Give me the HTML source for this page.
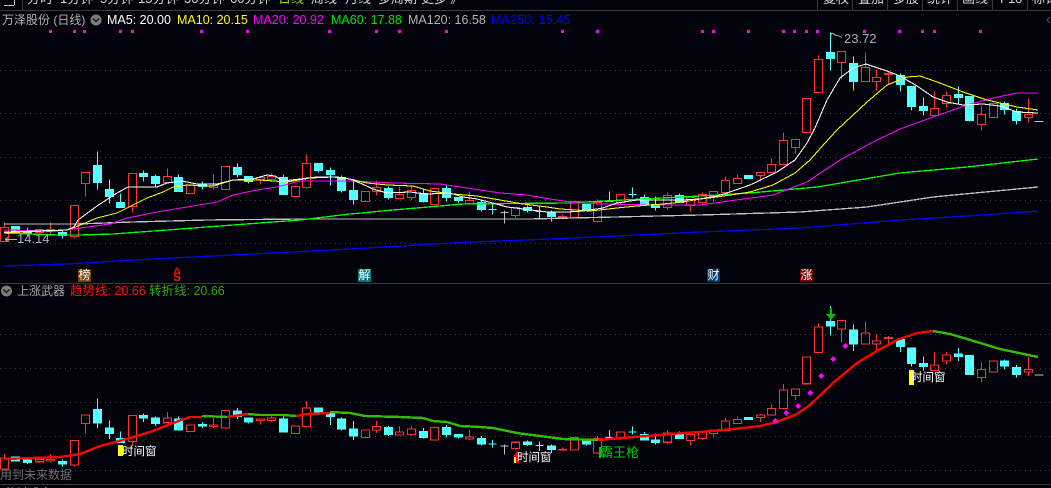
<!DOCTYPE html>
<html><head><meta charset="utf-8">
<style>
html,body{margin:0;padding:0;background:#02020a;}
#r{position:relative;width:1051px;height:488px;overflow:hidden;background:#02020a;font-family:"Liberation Sans","Noto Sans CJK SC",sans-serif;font-size:12.5px;}
#r div{position:absolute;white-space:nowrap;line-height:14px;}
svg{position:absolute;left:0;top:0;}
.tb{color:#d4d4d4;font-size:13px;top:-8px;}
.ma polyline{fill:none;stroke-width:1.3;}
.ma polyline.t{stroke-width:1.05;}
.tr polyline{fill:none;stroke-width:2.4;}
.box{color:#fff;font-size:12px;width:13px;height:13px;line-height:13px!important;text-align:center;top:269px;}
</style></head><body><div id="r">
<svg width="1051" height="488" viewBox="0 0 1051 488" shape-rendering="crispEdges">
<defs>
<g id="cd" transform="translate(.5,.5)" shape-rendering="crispEdges">
<path fill="none" stroke="#ff3232" shape-rendering="crispEdges" d="M0 227h8V241h-8zM4 222V227M35 229h8V232h-8zM46 229h8V231h-8zM50 222V229M50 231V233M70 205h8V236h-8zM74 236V238M81 172h8V183h-8zM85 183V196M128 173h8V206h-8zM132 206V212M163 176h8V182h-8zM167 168V176M186 185h8V193h-8zM209 185h8V187h-8zM213 174V185M213 187V189M221 166h8V189h-8zM256 177h8V179h-8zM260 179V184M267 176h8V179h-8zM271 173V176M271 179V181M291 186h8V196h-8zM302 163h8V187h-8zM306 154V163M306 187V188M361 191h8V201h-8zM372 187h8V191h-8zM376 180V187M376 191V195M395 194h8V198h-8zM399 186V194M407 190h8V197h-8zM411 186V190M411 197V199M430 188h8V204h-8zM434 187V188M434 204V205M465 200h8V203h-8zM469 191V200M469 203V204M511 207h8V215h-8zM515 215V217M558 216h8V217h-8zM562 214V216M570 201h8V217h-8zM593 202h8V221h-8zM597 199V202M597 221V222M616 194h8V202h-8zM620 202V204M663 195h8V207h-8zM667 192V195M667 207V209M686 197h8V205h-8zM690 205V211M698 194h8V202h-8zM702 192V194M702 202V204M709 191h8V196h-8zM713 196V201M721 180h8V192h-8zM725 176V180M733 178h8V183h-8zM737 174V178M756 172h8V175h-8zM760 171V172M760 175V181M767 164h8V172h-8zM771 158V164M779 140h8V164h-8zM783 132V140M783 164V165M791 139h8V147h-8zM795 138V139M795 147V153M802 98h8V132h-8zM806 132V133M814 59h8V92h-8zM818 55V59M837 51h8V62h-8zM841 62V79M861 67h8V81h-8zM865 52V67M872 77h8V81h-8zM876 69V77M876 81V90M884 73h8V74h-8zM888 71V73M888 74V84M930 108h8V115h-8zM934 91V108M942 95h8V103h-8zM946 91V95M946 103V107M977 114h8V124h-8zM981 105V114M981 124V130M989 103h8V117h-8zM993 102V103M1024 114h8V117h-8zM1028 98V114M1028 117V122"/>
<path stroke="#54ffff" fill="#54ffff" shape-rendering="crispEdges" d="M11 226h8V231h-8zM23 230h8V233h-8zM58 232h8V235h-8zM93 165h8V182h-8zM105 189h8V196h-8zM116 202h8V207h-8zM139 173h8V176h-8zM151 176h8V183h-8zM174 177h8V191h-8zM198 184h8V186h-8zM233 167h8V174h-8zM244 176h8V181h-8zM279 177h8V194h-8zM314 163h8V170h-8zM326 170h8V174h-8zM337 177h8V190h-8zM349 190h8V199h-8zM384 188h8V197h-8zM419 193h8V201h-8zM442 188h8V197h-8zM454 197h8V200h-8zM477 202h8V209h-8zM523 207h8V210h-8zM547 212h8V216h-8zM582 204h8V209h-8zM640 197h8V204h-8zM651 204h8V207h-8zM675 195h8V202h-8zM744 175h8V178h-8zM826 52h8V58h-8zM849 63h8V81h-8zM896 75h8V84h-8zM907 86h8V106h-8zM919 106h8V110h-8zM954 94h8V97h-8zM965 96h8V120h-8zM1000 103h8V109h-8zM1012 111h8V120h-8z"/>
<path fill="none" stroke="#54ffff" shape-rendering="crispEdges" d="M27 227V230M27 233V235M62 229V232M62 235V238M97 151V165M97 182V189M109 179V189M109 196V203M120 193V202M143 170V173M143 176V181M155 174V176M155 183V186M178 174V177M202 181V184M202 186V189M237 163V167M237 174V177M248 181V183M283 174V177M318 170V172M330 167V170M330 174V185M341 175V177M341 190V192M353 180V190M353 199V204M388 186V188M388 197V199M423 189V193M423 201V202M446 185V188M446 197V201M458 200V202M481 199V202M481 209V211M527 205V207M527 210V212M551 210V212M551 216V221M586 203V204M586 209V211M644 194V197M655 196V204M655 207V210M679 193V195M830 32V52M830 58V70M853 56V63M853 81V90M900 73V75M900 84V91M911 106V110M923 97V106M923 110V115M958 86V94M958 97V103M969 120V121M1004 101V103M1004 109V114M1016 108V111M1016 120V124M488 209h8M492 204V214M535 211h8M539 206V218M605 201h8M609 191V201M628 194h8M632 187V197"/>
<path fill="none" stroke="#c0c0c0" shape-rendering="crispEdges" d="M500 212h8M504 210V223M1034 121h9"/>
</g>
</defs>
<path stroke="#3a3a3a" d="M0 10.5H1051M0 283.5H1051M0 484.5H1051M22.5 0V10M817.5 0V10M852.5 0V10M887.5 0V10M922.5 0V10M957.5 0V10M992.5 0V10M1027.5 0V10"/>
<path stroke="#3c3c3c" stroke-dasharray="1 4" d="M0 70.5H1051M0 113.5H1051M0 157.5H1051M0 200.5H1051M0 243.5H1051M0 334.5H1051M0 368.5H1051M0 402.5H1051M0 436.5H1051M0 470.5H1051"/>
<path fill="#ff00ff" d="M49 30h3v3h-3zM73 30h3v3h-3zM83 30h3v3h-3zM119 30h3v3h-3zM131 30h3v3h-3zM200 30h3v3h-3zM246 30h3v3h-3zM328 30h3v3h-3zM375 30h3v3h-3zM398 30h3v3h-3zM445 30h3v3h-3zM561 30h3v3h-3zM596 30h3v3h-3zM701 30h3v3h-3zM712 30h3v3h-3zM747 30h3v3h-3zM782 30h3v3h-3zM793 30h3v3h-3zM805 30h3v3h-3zM816 30h3v3h-3zM863 30h3v3h-3zM898 30h3v3h-3zM921 30h3v3h-3zM933 30h3v3h-3zM979 30h3v3h-3z"/>
<use href="#cd"/>
<g class="ma">
<polyline stroke="#c0c0c0" points="4,224 77,224 133,222 207,220 300,219 350,219 450,219 530,219 615,217 700,215 800,212 867,207 933,197 1038,187"/>
<polyline stroke="#0000ff" points="4,266 67,264 133,260 233,255 350,249 450,243 550,239 617,236 700,232 800,228 900,220 967,216 1038,211"/>
<polyline stroke="#00ff00" points="4,233 57,235 80,235 113,234 167,230 233,225 300,220 350,214 393,210 463,204 567,203 700,196 750,193 817,187 900,173 967,167 1038,159"/>
<polyline class="t" stroke="#ff00ff" points="4,230 57,231 80,228 110,224 127,218 157,212 187,207 217,202 233,195 257,190 277,187 300,181 350,181 393,183 440,184 467,188 500,193 527,195 550,199 577,203 603,204 650,205 700,205 743,199 773,195 807,182 840,160 873,142 900,129 933,117 967,105 993,98 1017,93 1038,93"/>
<polyline class="t" stroke="#ffff00" points="4,233 67,230 78,226 97,218 117,213 133,205 147,198 163,192 173,187 187,185 213,186 233,180 260,180 287,182 310,178 333,177 350,179 367,183 387,185 413,186 430,191 453,194 477,196 500,200 523,204 547,207 560,209 590,211 617,208 637,206 663,204 683,202 700,199 717,197 750,192 773,185 795,173 810,160 825,143 837,130 867,102 887,85 907,77 920,76 940,83 963,92 987,100 1017,107 1038,110"/>
<polyline class="t" stroke="#ffffff" points="4,232 67,230 74,227 78,220 97,206 117,193 128,187 138,187 157,187 167,183 182,181 197,184 217,184 233,180 253,179 267,175 275,176 283,181 300,179 317,177 337,177 350,179 360,183 373,189 387,193 410,192 427,194 450,193 463,197 477,199 493,203 507,207 523,209 547,212 567,212 583,211 603,208 617,203 637,200 660,200 683,200 700,199 717,196 727,193 750,185 777,172 795,160 807,143 815,128 827,100 840,78 853,68 866,64 887,71 900,76 917,86 933,97 947,102 963,105 983,104 1000,106 1017,112 1038,113"/>
</g>
<use href="#cd" stroke-width="1.3" transform="translate(0,280.4) scale(1,.78)"/>
<g class="tr">
<polyline stroke="#ff0000" points="4,459 60,457 80,454 100,446 123,440 150,432 173,423 190,417 202,417"/>
<polyline stroke="#33bb00" points="202,416 227,417"/>
<polyline stroke="#ff0000" points="227,417 248,414"/>
<polyline stroke="#33bb00" points="248,414 260,415 283,415 296,416"/>
<polyline stroke="#ff0000" points="296,416 307,414 330,413"/>
<polyline stroke="#33bb00" points="330,412 350,413 365,416 400,417 423,418 433,421 447,422 460,426 480,427 493,428 517,433 540,436 563,439 598,440"/>
<polyline stroke="#ff0000" points="598,440 610,439 633,437 660,435 683,433 700,432 733,429 760,426 777,422 797,414 810,405 833,383 857,363 877,351 897,340 917,333 933,331"/>
<polyline stroke="#33bb00" points="933,331 950,334 967,339 1000,349 1038,357"/>
</g>
<path fill="#ff00ff" d="M775 418l3 3-3 3-3-3zM786 410l3 3-3 3-3-3zM798 403l3 3-3 3-3-3zM810 390l3 3-3 3-3-3zM821 373l3 3-3 3-3-3zM833 356l3 3-3 3-3-3zM845 343l3 3-3 3-3-3z"/>
<path fill="#00c000" d="M830 308h2v6h4l-5 6-5-6h4z"/>
<rect x="118" y="445" width="5" height="11" fill="#ffff00"/>
<rect x="909" y="370" width="5" height="15" fill="#ffff00"/>
<rect x="514" y="457" width="4" height="6" fill="#ffff00"/>
<path fill="#ff0000" d="M517 451l5 6h-3v6h-3v-6h-3z"/>
<rect x="599" y="447" width="2" height="11" fill="#00d000"/>
<path fill="none" stroke="#a8b0b8" d="M831 33.5h2l3 2 2 0 4 2M831 33v3M5 239.5h12M5 239.5l3-2M5 239.5l3 2"/>
<g shape-rendering="auto">
<circle cx="96" cy="20" r="5.5" fill="#7c7c7c"/>
<path d="M93 18.5l3 3 3-3" fill="none" stroke="#1a1a1a" stroke-width="1.5"/>
<circle cx="6.5" cy="291" r="5.5" fill="#7c7c7c"/>
<path d="M3.5 289.5l3 3 3-3" fill="none" stroke="#1a1a1a" stroke-width="1.5"/>
<path d="M1050 17l-3 3 3 3" fill="none" stroke="#555"/>
</g>
<path d="M4 5.5h10M14.5 0v5" fill="none" stroke="#c0c0c0"/>
</svg>
<div class="tb" style="left:27px">分时</div>
<div class="tb" style="left:60px">1分钟</div>
<div class="tb" style="left:100px">5分钟</div>
<div class="tb" style="left:138px">15分钟</div>
<div class="tb" style="left:184px">30分钟</div>
<div class="tb" style="left:230px">60分钟</div>
<div class="tb" style="left:278px;color:#a8c800">日线</div>
<div class="tb" style="left:311px">周线</div>
<div class="tb" style="left:345px">月线</div>
<div class="tb" style="left:378px">多周期</div>
<div class="tb" style="left:421px">更多</div>
<div class="tb" style="left:450px">》</div>
<div class="tb" style="left:823px">复权</div>
<div class="tb" style="left:858px">叠加</div>
<div class="tb" style="left:893px">多股</div>
<div class="tb" style="left:927px">统计</div>
<div class="tb" style="left:962px">画线</div>
<div class="tb" style="left:1000px">F10</div>
<div class="tb" style="left:1032px">标记</div>

<div style="left:2px;top:13px;color:#b4b4b4;font-size:12px">万泽股份 (日线)</div>
<div style="left:107px;top:13px;color:#fff">MA5: 20.00</div>
<div style="left:177px;top:13px;color:#ffff00">MA10: 20.15</div>
<div style="left:253px;top:13px;color:#ff00ff">MA20: 20.92</div>
<div style="left:331px;top:13px;color:#00e600">MA60: 17.88</div>
<div style="left:408px;top:13px;color:#b4b4b4">MA120: 16.58</div>
<div style="left:491px;top:13px;color:#0000ff;letter-spacing:.15px">MA250: 15.45</div>
<div style="left:844px;top:32px;color:#a8b0b8;font-size:13px">23.72</div>
<div style="left:17px;top:232px;color:#a8b0b8;font-size:13px">14.14</div>

<div class="box" style="left:78px;background:#7a3e08">榜</div>
<div style="left:172px;top:268px;color:#ff1010;font-size:12px;font-weight:bold;width:10px;text-align:center;line-height:8px">^</div>
<div style="left:172px;top:270px;color:#ff1010;font-size:12px;font-weight:bold;width:10px;text-align:center">S</div>
<div class="box" style="left:358px;background:#007880">解</div>
<div class="box" style="left:707px;background:#003a68">财</div>
<div class="box" style="left:800px;background:#7a0000">涨</div>

<div style="left:17px;top:284px;color:#a8a8a8;font-size:12px">上涨武器</div>
<div style="left:70px;top:284px;color:#ff1010">趋势线: 20.66</div>
<div style="left:149px;top:284px;color:#33aa00">转折线: 20.66</div>

<div style="left:122px;top:445px;color:#fff;font-size:11.5px">时间窗</div>
<div style="left:517px;top:451px;color:#fff;font-size:11.5px">时间窗</div>
<div style="left:911px;top:371px;color:#fff;font-size:11.5px">时间窗</div>
<div style="left:600px;top:446px;color:#00d000;font-size:13px">霸王枪</div>
<div style="left:0;top:468px;color:#707070;font-size:12px">用到未来数据</div>
<div style="left:4px;top:486px;color:#a0a0a0;font-size:12px">分时成交</div>
</div></body></html>
